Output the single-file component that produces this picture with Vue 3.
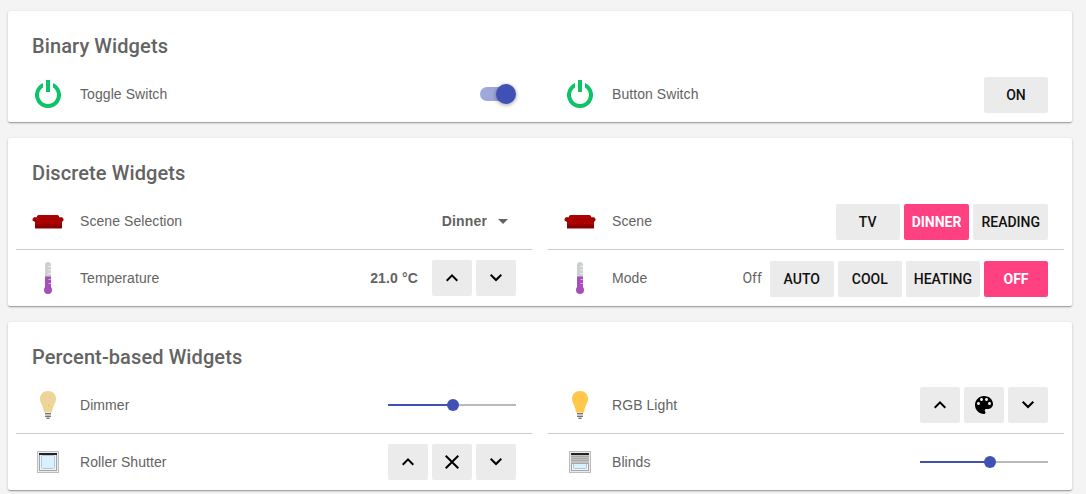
<script setup>
import { ref } from 'vue'

const toggled = ref(true)
const selectedScene = ref('Dinner')
const scenes = ['TV', 'Dinner', 'Reading']
const activeScene = ref('Dinner')
const modes = ['Auto', 'Cool', 'Heating', 'Off']
const activeMode = ref('Off')
const dimmer = ref(51)
const blinds = ref(55)
</script>

<template>
  <main class="page">
    <section class="card">
      <h2 class="title">Binary Widgets</h2>
      <div class="grid">
        <div class="widget">
          <svg class="icon" viewBox="0 0 32 32" aria-hidden="true">
            <path d="M11 5A13 13 0 1 0 21 5V9.5A9 9 0 1 1 11 9.5Z" fill="#0ac466" />
            <rect x="14" y="2" width="4" height="12" fill="#0ac466" />
          </svg>
          <label class="name" for="toggle">Toggle Switch</label>
          <input id="toggle" v-model="toggled" class="switch" type="checkbox" />
        </div>
        <div class="widget">
          <svg class="icon" viewBox="0 0 32 32" aria-hidden="true">
            <path d="M11 5A13 13 0 1 0 21 5V9.5A9 9 0 1 1 11 9.5Z" fill="#0ac466" />
            <rect x="14" y="2" width="4" height="12" fill="#0ac466" />
          </svg>
          <span class="name">Button Switch</span>
          <div class="buttons text-buttons">
            <button class="btn" type="button">ON</button>
          </div>
        </div>
      </div>
    </section>

    <section class="card">
      <h2 class="title">Discrete Widgets</h2>
      <div class="grid">
        <div class="widget">
          <svg class="icon" viewBox="0 0 32 32" aria-hidden="true">
            <path d="M4.500 12.500Q5 10 6.500 10H25.500Q27 10 27.500 12.500L30 12.500Q31.800 13 31.700 15L30 17V23.500H3V17L.5 15.500Q0 13.500 2 12.500Z" fill="#ad0000" />
            <path d="M5 14H27V15H5Z" fill="#9a0000" />
            <path d="M3 19H30V21H3Z" fill="#980000" />
            <path d="M3 21H30V23H3Z" fill="#860000" />
            <path d="M1 15.500H4M28.500 15.500H31M1.500 13H4.500M27.500 13H30.500" stroke="#7d0d0d" fill="none" />
            <path d="M6 23h2v1H6zM25 23h2v1H25z" fill="#999" />
          </svg>
          <label class="name" for="scene">Scene Selection</label>
          <div class="select-box">
            <select id="scene" v-model="selectedScene" class="select">
              <option v-for="s in scenes" :key="s">{{ s }}</option>
            </select>
            <svg class="caret" viewBox="0 0 10 5" aria-hidden="true"><path d="M0 0H10L5 5Z" /></svg>
          </div>
        </div>
        <div class="widget">
          <svg class="icon" viewBox="0 0 32 32" aria-hidden="true">
            <path d="M4.500 12.500Q5 10 6.500 10H25.500Q27 10 27.500 12.500L30 12.500Q31.800 13 31.700 15L30 17V23.500H3V17L.5 15.500Q0 13.500 2 12.500Z" fill="#ad0000" />
            <path d="M5 14H27V15H5Z" fill="#9a0000" />
            <path d="M3 19H30V21H3Z" fill="#980000" />
            <path d="M3 21H30V23H3Z" fill="#860000" />
            <path d="M1 15.500H4M28.500 15.500H31M1.500 13H4.500M27.500 13H30.500" stroke="#7d0d0d" fill="none" />
            <path d="M6 23h2v1H6zM25 23h2v1H25z" fill="#999" />
          </svg>
          <span class="name">Scene</span>
          <div class="buttons text-buttons">
            <button
              v-for="s in scenes" :key="s" type="button"
              class="btn" :class="{ active: s === activeScene }"
              @click="activeScene = s"
            >{{ s.toUpperCase() }}</button>
          </div>
        </div>
        <div class="widget">
          <svg class="icon" viewBox="0 0 32 32" aria-hidden="true">
            <path d="M13 15V3a3 3 0 0 1 6 0V15Z" fill="#cdd0d2" />
            <path d="M13 14.500H19V25H13Z" fill="#a74fb8" />
            <circle cx="16" cy="28" r="4" fill="#a74fb8" />
            <path d="M16.500 4.500H19M16.500 8H19M16.500 11.500H19" stroke="#f0f2f3" fill="none" />
            <path d="M16.500 17.500H19M16.500 21.500H19" stroke="#d9a9e2" fill="none" />
          </svg>
          <span class="name">Temperature</span>
          <span class="value">21.0 °C</span>
          <div class="buttons">
            <button class="btn square" type="button" aria-label="Increase">
              <svg viewBox="0 0 24 24"><path d="M7.410 15.410 12 10.830l4.590 4.580L18 14l-6-6-6 6z" /></svg>
            </button>
            <button class="btn square" type="button" aria-label="Decrease">
              <svg viewBox="0 0 24 24"><path d="M7.410 8L12 12.580 16.590 8 18 9.410l-6 6-6-6z" /></svg>
            </button>
          </div>
        </div>
        <div class="widget">
          <svg class="icon" viewBox="0 0 32 32" aria-hidden="true">
            <path d="M13 15V3a3 3 0 0 1 6 0V15Z" fill="#cdd0d2" />
            <path d="M13 14.500H19V25H13Z" fill="#a74fb8" />
            <circle cx="16" cy="28" r="4" fill="#a74fb8" />
            <path d="M16.500 4.500H19M16.500 8H19M16.500 11.500H19" stroke="#f0f2f3" fill="none" />
            <path d="M16.500 17.500H19M16.500 21.500H19" stroke="#d9a9e2" fill="none" />
          </svg>
          <span class="name">Mode</span>
          <span class="state">{{ activeMode }}</span>
          <div class="buttons text-buttons">
            <button
              v-for="m in modes" :key="m" type="button"
              class="btn" :class="{ active: m === activeMode }"
              @click="activeMode = m"
            >{{ m.toUpperCase() }}</button>
          </div>
        </div>
      </div>
    </section>

    <section class="card">
      <h2 class="title">Percent-based Widgets</h2>
      <div class="grid">
        <div class="widget">
          <svg class="icon" viewBox="0 0 32 32" aria-hidden="true">
            <path d="M16 2C11 2 8 5.500 8 10C8 14 11.500 17 12 23.500H20C20.500 17 24 14 24 10C24 5.500 21 2 16 2Z" fill="#ecd597" />
            <path d="M16 16h1v1h-1z" fill="#f3a957" />
            <path d="M13 24H19V28H17.500V30H14.500V28H13Z" fill="#c4c4c4" />
            <path d="M13 24.500H19M13 27.500H19M14.500 29.500H17.500" stroke="#747474" fill="none" />
          </svg>
          <label class="name" for="dimmer">Dimmer</label>
          <input id="dimmer" v-model="dimmer" class="slider" type="range" min="0" max="100" :style="{ '--fill': dimmer + '%' }" />
        </div>
        <div class="widget">
          <svg class="icon" viewBox="0 0 32 32" aria-hidden="true">
            <path d="M16 2C11 2 8 5.500 8 10C8 14 11.500 17 12 23.500H20C20.500 17 24 14 24 10C24 5.500 21 2 16 2Z" fill="#ffc84d" />
            <path d="M13 24H19V28H17.500V30H14.500V28H13Z" fill="#c4c4c4" />
            <path d="M13 24.500H19M13 27.500H19M14.500 29.500H17.500" stroke="#747474" fill="none" />
          </svg>
          <span class="name">RGB Light</span>
          <div class="buttons">
            <button class="btn square" type="button" aria-label="Brighter">
              <svg viewBox="0 0 24 24"><path d="M7.410 15.410 12 10.830l4.590 4.580L18 14l-6-6-6 6z" /></svg>
            </button>
            <button class="btn square" type="button" aria-label="Pick colour">
              <svg viewBox="0 0 24 24"><path d="M12 3c-4.970 0-9 4.030-9 9s4.030 9 9 9c.83 0 1.500-.67 1.500-1.500 0-.39-.15-.74-.39-1.010-.23-.26-.38-.61-.38-.99 0-.83.67-1.500 1.500-1.500H16c2.760 0 5-2.240 5-5 0-4.420-4.030-8-9-8zm-5.500 9c-.83 0-1.500-.67-1.500-1.500S5.670 9 6.500 9 8 9.670 8 10.500 7.330 12 6.500 12zm3-4C8.670 8 8 7.330 8 6.500S8.670 5 9.500 5s1.500.67 1.500 1.500S10.330 8 9.500 8zm5 0c-.83 0-1.500-.67-1.500-1.500S13.670 5 14.500 5s1.500.67 1.500 1.500S15.330 8 14.500 8zm3 4c-.83 0-1.500-.67-1.500-1.500S16.670 9 17.500 9s1.500.67 1.500 1.500-.67 1.500-1.500 1.500z" /></svg>
            </button>
            <button class="btn square" type="button" aria-label="Dimmer">
              <svg viewBox="0 0 24 24"><path d="M7.410 8L12 12.580 16.590 8 18 9.410l-6 6-6-6z" /></svg>
            </button>
          </div>
        </div>
        <div class="widget">
          <svg class="icon" viewBox="0 0 32 32" aria-hidden="true">
            <rect x="5.500" y="5.500" width="21" height="21" fill="#ececec" stroke="#bcbcbc" />
            <rect x="7.500" y="7.500" width="17" height="17" fill="#f4f4f4" stroke="#a5a5a5" />
            <rect x="9.500" y="9.500" width="13" height="13" rx="1" fill="#d8f0ff" stroke="#aac8e4" />
            <rect x="7" y="7" width="18" height="2" fill="#222" />
          </svg>
          <span class="name">Roller Shutter</span>
          <div class="buttons">
            <button class="btn square" type="button" aria-label="Up">
              <svg viewBox="0 0 24 24"><path d="M7.410 15.410 12 10.830l4.590 4.580L18 14l-6-6-6 6z" /></svg>
            </button>
            <button class="btn square" type="button" aria-label="Stop">
              <svg viewBox="0 0 24 24"><path d="M19 6.410 17.590 5 12 10.590 6.410 5 5 6.410 10.590 12 5 17.590 6.410 19 12 13.410 17.590 19 19 17.590 13.410 12z" /></svg>
            </button>
            <button class="btn square" type="button" aria-label="Down">
              <svg viewBox="0 0 24 24"><path d="M7.410 8L12 12.580 16.590 8 18 9.410l-6 6-6-6z" /></svg>
            </button>
          </div>
        </div>
        <div class="widget">
          <svg class="icon" viewBox="0 0 32 32" aria-hidden="true">
            <rect x="5.500" y="5.500" width="21" height="21" fill="#ececec" stroke="#bcbcbc" />
            <rect x="7.500" y="7.500" width="17" height="17" fill="#f4f4f4" stroke="#a5a5a5" />
            <rect x="9.500" y="9.500" width="13" height="13" rx="1" fill="#d8f0ff" stroke="#aac8e4" />
            <rect x="7" y="9" width="18" height="9" fill="#c2c2c2" />
            <path d="M7 10.500H25M7 12.500H25M7 14.500H25M7 17.500H25" stroke="#a6a6a6" fill="none" />
            <rect x="7" y="7" width="18" height="2" fill="#222" />
          </svg>
          <label class="name" for="blinds">Blinds</label>
          <input id="blinds" v-model="blinds" class="slider" type="range" min="0" max="100" :style="{ '--fill': blinds + '%' }" />
        </div>
      </div>
    </section>
  </main>
</template>

<style>
body {
  margin: 0;
  background: #f4f4f4;
}
</style>

<style scoped>
.page {
  display: flex;
  flex-direction: column;
  gap: 16px;
  padding: 11px 14px 4px 8px;
  color: #636363;
  font: 14px/20px "Liberation Sans", Arial, sans-serif;
}
.card {
  padding: 0 8px;
  background: #fff;
  border-radius: 2px;
  box-shadow: 0 1px 3px rgba(0, 0, 0, 0.2), 0 1px 1px rgba(0, 0, 0, 0.14), 0 2px 1px -1px rgba(0, 0, 0, 0.12);
}
.title {
  margin: 0;
  padding: 23px 16px 8px;
  font: 500 20px/24px Roboto, sans-serif;
  letter-spacing: 0.005em;
}
.grid {
  display: grid;
  grid-template-columns: 1fr 1fr;
  column-gap: 16px;
}
.widget {
  display: flex;
  align-items: center;
  height: 56px;
  padding: 0 16px;
}
.widget:nth-child(n + 3) {
  border-top: 1px solid #ccc;
}
.icon {
  flex: none;
  width: 32px;
  height: 32px;
  margin-right: 16px;
}
.name {
  flex: 1;
  letter-spacing: 0.005em;
}
.value {
  margin-right: 14px;
  font-weight: 700;
  letter-spacing: 0.01em;
}
.state {
  margin-right: 8px;
  font-family: Roboto, sans-serif;
}
.buttons {
  display: flex;
  gap: 4px;
}
.text-buttons {
  padding-top: 2px;
}
.btn {
  min-width: 64px;
  height: 36px;
  padding: 0 8px;
  border: 0;
  border-radius: 2px;
  background: #ebebeb;
  color: #111;
  font: 500 14px/34px Roboto, sans-serif;
}
.btn.active {
  background: #ff4081;
  color: #fff;
  font-weight: 700;
}
.square {
  display: flex;
  align-items: center;
  justify-content: center;
  min-width: 40px;
  padding: 0;
}
.square svg {
  width: 24px;
  height: 24px;
}
.select-box {
  position: relative;
}
.select {
  appearance: none;
  width: 96px;
  height: 32px;
  padding: 0 29px 0 0;
  border: 0;
  background: none;
  color: inherit;
  font: inherit;
  font-weight: 700;
  letter-spacing: 0.01em;
  text-align-last: right;
}
.caret {
  position: absolute;
  top: 14px;
  right: 8px;
  width: 10px;
  height: 5px;
  fill: #636363;
  pointer-events: none;
}
.switch {
  appearance: none;
  position: relative;
  width: 36px;
  height: 20px;
  margin: 0;
}
.switch::before {
  content: "";
  position: absolute;
  inset: 3px 1px 3px 0;
  border-radius: 8px;
  background: #bdbdbd;
}
.switch::after {
  content: "";
  position: absolute;
  top: 0;
  left: 0;
  width: 20px;
  height: 20px;
  border-radius: 50%;
  background: #fafafa;
  box-shadow: 0 1px 4px rgba(0, 0, 0, 0.4);
}
.switch:checked::before {
  background: #9fa8da;
}
.switch:checked::after {
  left: 16px;
  background: #3f51b5;
}
.slider {
  appearance: none;
  width: 128px;
  height: 12px;
  margin: 0;
  background: linear-gradient(to right, #3f51b5 var(--fill), #bababa var(--fill)) center / 100% 2px no-repeat;
}
.slider::-webkit-slider-thumb {
  appearance: none;
  width: 12px;
  height: 12px;
  border-radius: 50%;
  background: #3f51b5;
}
</style>
